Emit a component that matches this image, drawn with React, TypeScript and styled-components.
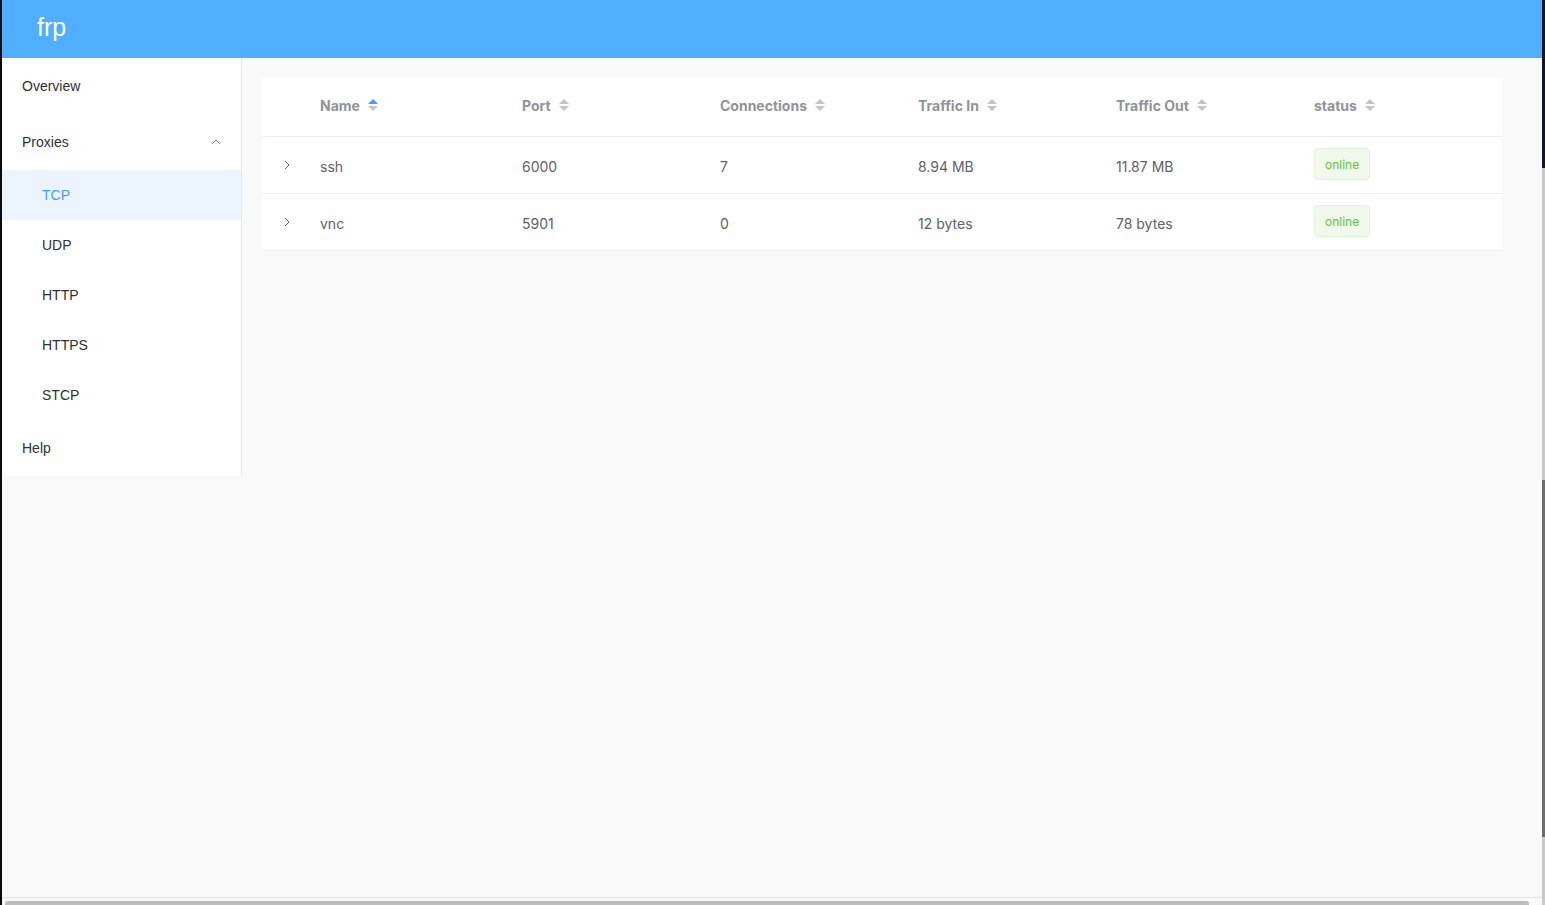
import React from "react";
import styled, { createGlobalStyle } from "styled-components";

const Global = createGlobalStyle`
  html, body { margin: 0; padding: 0; height: 100%; overflow: hidden; background: #f9f9f9; }
  #root { height: 100%; }
  * { box-sizing: border-box; }
`;

const Screen = styled.div`
  display: flex;
  width: 1545px;
  height: 905px;
  background: #f9f9f9;
`;

const LeftEdge = styled.div`
  width: 2px;
  flex: none;
  background: #0b0b0d;
`;

const Window = styled.div`
  flex: 1;
  display: flex;
  flex-direction: column;
  min-width: 0;
`;

const RightStrip = styled.div`
  width: 3px;
  flex: none;
  display: flex;
  flex-direction: column;
`;

const StripSeg = styled.div<{ $h: number; $c: string }>`
  height: ${(p) => p.$h}px;
  flex: ${(p) => (p.$h === 0 ? 1 : "none")};
  background: ${(p) => p.$c};
`;

const Header = styled.header`
  height: 58px;
  flex: none;
  background: #50aefe;
  display: flex;
  align-items: center;
  padding-left: 35px;
`;

const Logo = styled.span`
  font-family: "Liberation Sans", Arial, sans-serif;
  font-size: 25px;
  color: #ffffff;
  line-height: 1;
  margin-top: -4px;
`;

const Body = styled.div`
  flex: 1;
  display: flex;
  align-items: flex-start;
  min-height: 0;
`;

const Sidebar = styled.nav`
  width: 240px;
  flex: none;
  background: #ffffff;
  border-right: 1px solid #e6e6e6;
  display: flex;
  flex-direction: column;
  font-family: "Liberation Sans", Arial, sans-serif;
  font-size: 14px;
  color: #303133;
`;

const MenuItem = styled.div<{ $sub?: boolean; $active?: boolean }>`
  height: ${(p) => (p.$sub ? 50 : 56)}px;
  display: flex;
  align-items: center;
  justify-content: space-between;
  padding: 0 20px 0 ${(p) => (p.$sub ? 40 : 20)}px;
  background: ${(p) => (p.$active ? "#ecf5ff" : "transparent")};
  color: ${(p) => (p.$active ? "#409eff" : "#303133")};
`;

const Main = styled.main`
  flex: 1;
  padding: 20px 40px 20px 20px;
  min-width: 0;
`;

const Table = styled.div`
  background: #ffffff;
  font-family: Inter, "Liberation Sans", sans-serif;
  font-size: 14px;
  color: #606266;
`;

const Row = styled.div<{ $head?: boolean }>`
  display: grid;
  grid-template-columns: 48px 202px repeat(5, 198px);
  height: ${(p) => (p.$head ? 59 : 57)}px;
  border-bottom: 1px solid #ebeef5;
  align-items: center;
`;

const HeadCell = styled.div`
  padding: 0 10px 4px;
  display: flex;
  align-items: center;
  gap: 8px;
  font-weight: 700;
  color: #909399;
`;

const Cell = styled.div<{ $tag?: boolean }>`
  padding: ${(p) => (p.$tag ? "0 10px 2px" : "2px 10px 0")};
  display: flex;
  align-items: center;
`;

const ExpandCell = styled.div`
  display: flex;
  justify-content: center;
  align-items: center;
  padding-left: 2px;
`;

const Tag = styled.span`
  display: inline-flex;
  align-items: center;
  height: 32px;
  padding: 0 10px;
  font-size: 12px;
  color: #67c23a;
  background: #f0f9eb;
  border: 1px solid #e1f3d8;
  border-radius: 4px;
`;

const BottomBar = styled.div`
  height: 8px;
  flex: none;
  border-top: 1px solid #e4e4e4;
  padding: 3px 13px 0 3px;
  background: #f9f9f9;
`;

const ScrollThumb = styled.div`
  height: 5px;
  background: #bdbdbd;
  border-radius: 3px 3px 0 0;
`;

const SortCaret = ({ active }: { active?: "asc" | "desc" }) => (
  <svg width="10" height="12" viewBox="0 0 10 12">
    <polygon points="5,0 10,5 0,5" fill={active === "asc" ? "#409eff" : "#c0c4cc"} />
    <polygon points="0,7 10,7 5,12" fill={active === "desc" ? "#409eff" : "#c0c4cc"} />
  </svg>
);

const ChevronRight = () => (
  <svg width="6" height="10" viewBox="0 0 6 10">
    <polyline points="1,1 5,5 1,9" fill="none" stroke="#606266" strokeWidth="1" />
  </svg>
);

const ChevronUp = () => (
  <svg width="10" height="6" viewBox="0 0 10 6">
    <polyline points="1,5 5,1 9,5" fill="none" stroke="#909399" strokeWidth="1" />
  </svg>
);

const columns = ["Name", "Port", "Connections", "Traffic In", "Traffic Out", "status"];

const data = [
  { name: "ssh", port: "6000", conns: "7", tin: "8.94 MB", tout: "11.87 MB", status: "online" },
  { name: "vnc", port: "5901", conns: "0", tin: "12 bytes", tout: "78 bytes", status: "online" },
];

const subItems = ["TCP", "UDP", "HTTP", "HTTPS", "STCP"];

export default function App() {
  return (
    <>
      <Global />
      <Screen>
        <LeftEdge />
        <Window>
          <Header>
            <Logo>frp</Logo>
          </Header>
          <Body>
            <Sidebar>
              <MenuItem>Overview</MenuItem>
              <MenuItem>
                Proxies
                <ChevronUp />
              </MenuItem>
              {subItems.map((s) => (
                <MenuItem key={s} $sub $active={s === "TCP"}>
                  {s}
                </MenuItem>
              ))}
              <MenuItem>Help</MenuItem>
            </Sidebar>
            <Main>
              <Table>
                <Row $head>
                  <div />
                  {columns.map((c, i) => (
                    <HeadCell key={c}>
                      {c}
                      <SortCaret active={i === 0 ? "asc" : undefined} />
                    </HeadCell>
                  ))}
                </Row>
                {data.map((d) => (
                  <Row key={d.name}>
                    <ExpandCell>
                      <ChevronRight />
                    </ExpandCell>
                    <Cell>{d.name}</Cell>
                    <Cell>{d.port}</Cell>
                    <Cell>{d.conns}</Cell>
                    <Cell>{d.tin}</Cell>
                    <Cell>{d.tout}</Cell>
                    <Cell $tag>
                      <Tag>{d.status}</Tag>
                    </Cell>
                  </Row>
                ))}
              </Table>
            </Main>
          </Body>
          <BottomBar>
            <ScrollThumb />
          </BottomBar>
        </Window>
        <RightStrip>
          <StripSeg $h={168} $c="#12141f" />
          <StripSeg $h={312} $c="#c9c9c9" />
          <StripSeg $h={357} $c="#6e6e6e" />
          <StripSeg $h={0} $c="#c9c9c9" />
        </RightStrip>
      </Screen>
    </>
  );
}
